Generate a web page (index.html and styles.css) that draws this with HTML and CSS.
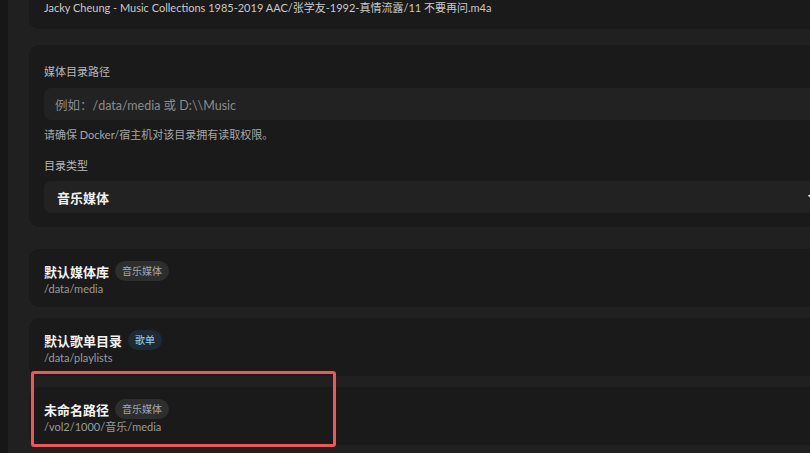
FILE: index.html
```html
<!DOCTYPE html>
<html lang="zh-CN">
<head>
<meta charset="utf-8">
<title>媒体目录</title>
<link rel="stylesheet" href="styles.css">
</head>
<body>
<div class="app">
  <div class="edge"></div>
  <main class="main">
    <div class="scroll">
      <section class="card card-file">
        <div class="file-line">Jacky Cheung - Music Collections 1985-2019 AAC/张学友-1992-真情流露/11 不要再问.m4a</div>
      </section>

      <section class="card card-form">
        <div class="label">媒体目录路径</div>
        <div class="input"><span class="placeholder">例如：/data/media 或 D:\\Music</span></div>
        <div class="hint">请确保 Docker/宿主机对该目录拥有读取权限。</div>
        <div class="label label-2">目录类型</div>
        <div class="select">
          <span class="select-value">音乐媒体</span>
          <svg class="chev" width="10" height="10" viewBox="0 0 10 10"><path d="M1 3.5 L5 7 L9 3.5" fill="none" stroke="#f2f2f2" stroke-width="1.6" stroke-linecap="round" stroke-linejoin="round"/></svg>
        </div>
      </section>

      <div class="list">
        <section class="card item">
          <div class="item-head"><span class="item-title">默认媒体库</span><span class="badge">音乐媒体</span></div>
          <div class="item-path">/data/media</div>
        </section>
        <section class="card item">
          <div class="item-head"><span class="item-title">默认歌单目录</span><span class="badge badge-blue">歌单</span></div>
          <div class="item-path">/data/playlists</div>
        </section>
        <section class="card item item-marked">
          <div class="item-head"><span class="item-title">未命名路径</span><span class="badge">音乐媒体</span></div>
          <div class="item-path">/vol2/1000/音乐/media</div>
          <div class="highlight"></div>
        </section>
      </div>
    </div>
  </main>
</div>
</body>
</html>
```
FILE: styles.css
```css
html, body {
  margin: 0;
  padding: 0;
  height: 100%;
  background: #202020;
  overflow: hidden;
}
body {
  font-family: Lato, "Noto Sans CJK SC", sans-serif;
  color: #e6e6e6;
}
.app {
  display: flex;
  height: 100%;
}
.edge {
  width: 8px;
  flex: none;
  background: #171717;
}
.main {
  flex: 1;
  padding-left: 21px;
  overflow: hidden;
}
.scroll {
  width: 816px;
  margin-top: -12px;
  display: flex;
  flex-direction: column;
}
.card {
  background: #1a1a1a;
  border-radius: 10px;
}
.card-file {
  padding: 12px 15px 13px;
}
.file-line {
  font-size: 11px;
  line-height: 16px;
  color: #c9c9c9;
  white-space: nowrap;
}
.card-form {
  margin-top: 16px;
  padding: 18px 15px 14px;
}
.label {
  font-size: 11px;
  line-height: 17px;
  color: #b8b8b8;
  margin-bottom: 8px;
}
.label-2 {
  margin-top: 14px;
  margin-bottom: 7px;
}
.input {
  height: 32px;
  background: #222222;
  border-radius: 7px;
  display: flex;
  align-items: center;
  padding-left: 11px;
}
.placeholder {
  font-size: 12.5px;
  color: #8b8b8b;
}
.hint {
  margin-top: 7px;
  font-size: 11px;
  line-height: 16px;
  color: #a6a6a6;
}
.select {
  height: 32px;
  background: #222222;
  border-radius: 7px;
  display: flex;
  align-items: center;
  justify-content: space-between;
  padding: 0 12px 0 13px;
}
.select-value {
  font-size: 13px;
  font-weight: 600;
  color: #f0f0f0;
}
.chev {
  display: block;
}
.list {
  margin-top: 22px;
  display: flex;
  flex-direction: column;
  gap: 11px;
}
.item {
  padding: 12px 15px 10px;
  position: relative;
}
.item-head {
  display: flex;
  align-items: center;
  gap: 6px;
  height: 20px;
}
.item-title {
  font-size: 13px;
  font-weight: 700;
  color: #f2f2f2;
}
.badge {
  height: 20px;
  line-height: 20px;
  padding: 0 7px;
  border-radius: 10px;
  background: #2e2e2e;
  color: #a8a8a8;
  font-size: 10px;
}
.badge-blue {
  background: #1c2b35;
  color: #9fd4f2;
}
.item-path {
  font-size: 11px;
  line-height: 16px;
  color: #9b9b9b;
}
.highlight {
  position: absolute;
  left: 2px;
  top: -16px;
  width: 305px;
  height: 76px;
  box-sizing: border-box;
  border: 3px solid #f45454;
  border-radius: 3px;
  pointer-events: none;
}
```
